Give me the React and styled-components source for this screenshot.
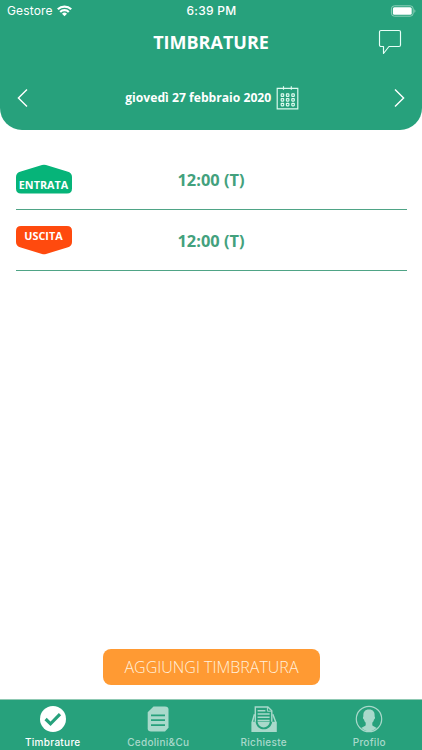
import React from "react";
import styled, { createGlobalStyle } from "styled-components";

const GlobalStyle = createGlobalStyle`
  * { box-sizing: border-box; }
  body { margin: 0; background: #fff; }
`;

const Screen = styled.div`
  width: 422px;
  height: 750px;
  display: flex;
  flex-direction: column;
  overflow: hidden;
  background: #fff;
  font-family: "Open Sans", sans-serif;
`;

const Header = styled.header`
  height: 129.5px;
  flex: none;
  background: #27a17c;
  border-radius: 0 0 22px 22px;
  color: #fff;
`;

const StatusBar = styled.div`
  height: 22px;
  padding: 0 6px 0 7px;
  display: grid;
  grid-template-columns: 1fr auto 1fr;
  align-items: center;
  font: 400 12px/22px Inter, sans-serif;
`;

const Carrier = styled.div`
  display: flex;
  align-items: center;
  gap: 4px;
  letter-spacing: 0.16px;
`;

const Clock = styled.div`
  font-weight: 500;
  letter-spacing: 0.3px;
`;

const Battery = styled.svg`
  justify-self: end;
`;

const TitleRow = styled.div`
  height: 40px;
  display: grid;
  grid-template-columns: 1fr auto 1fr;
  align-items: center;
  padding-right: 20px;
  padding-left: 20px;
`;

const Title = styled.h1`
  grid-column: 2;
  margin: 0;
  font-size: 18px;
  line-height: 24px;
  font-weight: 700;
`;

const IconButton = styled.button`
  display: flex;
  padding: 0;
  border: 0;
  background: none;
  color: inherit;
  justify-self: ${(p) => p.$align || "auto"};
`;

const DateRow = styled.div`
  height: 71px;
  padding: 0 17.5px 0 17px;
  display: flex;
  align-items: center;
  justify-content: space-between;
`;

const DatePicker = styled.div`
  display: flex;
  align-items: center;
  gap: 4.5px;
  padding-left: 2.5px;
  font-size: 12.15px;
  line-height: 16px;
  font-weight: 700;
  white-space: nowrap;
`;

const Entries = styled.main`
  flex: 1;
  padding: 19.5px 15.5px 0;
`;

const Entry = styled.div`
  height: 61px;
  display: grid;
  grid-template-columns: 56px 1fr 56px;
  align-items: center;
  border-bottom: 1px solid #4fa486;
`;

const Badge = styled.div`
  display: grid;
  width: 56px;
  height: 30px;
  > * { grid-area: 1 / 1; }
`;

const BadgeLabel = styled.span`
  align-self: ${(p) => (p.$down ? "start" : "end")};
  justify-self: center;
  margin: ${(p) => (p.$down ? "2.5px 0 0" : "0 0 2px")};
  color: #fff;
  font-size: 10.8px;
  line-height: 15px;
  font-weight: 700;
  z-index: 1;
`;

const Time = styled.span`
  padding-top: 2px;
  text-align: center;
  color: #43a17d;
  font-size: 16.4px;
  line-height: 22px;
  font-weight: 700;
`;

const ActionButton = styled.button`
  align-self: center;
  flex: none;
  width: 217px;
  height: 36px;
  margin: 0 0 14px 1px;
  padding: 0;
  border: 0;
  border-radius: 8px;
  background: #ff9a33;
  color: #fff0dc;
  font: 300 16px/36px "Open Sans", sans-serif;
  white-space: nowrap;
`;

const TabBar = styled.nav`
  flex: none;
  height: 51px;
  display: grid;
  grid-template-columns: repeat(4, 1fr);
  background: #27a17c;
  border-top: 1px solid #8fc9b3;
`;

const Tab = styled.div`
  display: flex;
  flex-direction: column;
  align-items: center;
  padding-top: 5px;
  color: ${(p) => (p.$active ? "#fff" : "#a9d9cb")};
`;

const TabLabel = styled.span`
  margin-top: 2px;
  font: 500 10px/14px Inter, sans-serif;
  letter-spacing: 0.3px;
`;

const WifiIcon = () => (
  <svg width="15" height="12" viewBox="0 0 15 12" fill="none" stroke="#fff" strokeWidth="2.2">
    <path d="M.8 4.3a9.5 9.5 0 0 1 13.4 0" />
    <path d="M3.200 7a6 6 0 0 1 8.600 0" />
    <path d="M7.500 11.300 5 8.800a3.500 3.500 0 0 1 5 0Z" fill="#fff" stroke="none" />
  </svg>
);

const BatteryIcon = () => (
  <Battery width="26" height="12" viewBox="0 0 26 12">
    <rect x="1.400" y=".8" width="21.800" height="10.400" rx="3" fill="none" stroke="#8dcfb9" />
    <rect x="2.900" y="2.300" width="18.800" height="7.400" rx="1.500" fill="#fff" />
    <path d="M24.400 4.200c1.300.4 1.300 3.200 0 3.600Z" fill="#8dcfb9" />
  </Battery>
);

const ChatIcon = () => (
  <svg width="24" height="26" viewBox="0 0 24 26" fill="none" stroke="#e8fff7" strokeWidth="1.150" strokeLinejoin="round">
    <path d="M3 1.500h18a1.500 1.500 0 0 1 1.500 1.500v13a1.500 1.500 0 0 1-1.500 1.500H11L5.500 24.500v-7H3a1.500 1.500 0 0 1-1.500-1.500v-13A1.500 1.500 0 0 1 3 1.500Z" />
  </svg>
);

const Chevron = ({ right }) => (
  <svg width="11" height="20" viewBox="0 0 11 20" fill="none" stroke="#fff" strokeWidth="1.400">
    <path d={right ? "M1 1.400 9.600 10 1 18.600" : "M10 1.400 1.400 10l8.600 8.600"} />
  </svg>
);

const CalendarIcon = () => (
  <svg width="23" height="24" viewBox="0 0 23 24" fill="none" stroke="#dffbf0" strokeWidth="1.150">
    <path d="M1.200 2.400h20.600v20.400H1.200ZM7.500.3v3.500M15.300.3v3.500" />
    {[8.3, 13, 17.7].map((y) =>
      [5.2, 10.4, 15.8].map((x) => (
        <rect key={`${x}-${y}`} x={x} y={y - 0.4} width="2.500" height="2.500" rx=".5" />
      ))
    )}
  </svg>
);

const BadgeShape = ({ down }) => (
  <svg width="56" height="30" viewBox="0 0 56 30" fill={down ? "#ff4a0e" : "#06b479"}>
    <path
      d={
        down
          ? "M5 1h46q5 0 5 5v11q0 4-4 5.300L30 29q-2 .7-4 0L4 22.300Q0 21 0 17V6Q0 1 5 1Z"
          : "M5 29.500h46q5 0 5-5V13q0-4-4-5.300L30 1q-2-.7-4 0L4 7.700Q0 9 0 13v11.500q0 5 5 5Z"
      }
    />
  </svg>
);

const CheckIcon = () => (
  <svg width="28" height="28" viewBox="0 0 28 28">
    <circle cx="14" cy="14" r="13" fill="currentColor" />
    <path d="m6.600 14 4.900 4.800 9.500-9.600" fill="none" stroke="#27a17c" strokeWidth="3.200" />
  </svg>
);

const DocumentIcon = () => (
  <svg width="28" height="28" viewBox="0 0 28 28">
    <path d="M9.500 1.500H21q3.500 0 3.500 3v18.200L21 26.500H7q-3.300 0-3.300-3V7.300Z" fill="currentColor" />
    <path d="M7 10.300h14M7 15.200h14M7 20.100h14" stroke="#27a17c" strokeWidth="1.700" />
  </svg>
);

const InboxIcon = () => (
  <svg width="28" height="28" viewBox="0 0 28 28" fill="none">
    <path d="M4.500 9.300 2.300 17M22.800 9.300l2.900 7.700" stroke="currentColor" strokeWidth="1.500" />
    <path d="M1.400 16.700h4.200c1.400 10.200 15 10.200 16.600 0h4.600v10.200H1.400Z" fill="currentColor" />
    <path d="M5.300 16.700V2h12.600l3.900 3.800v10.900" stroke="currentColor" strokeWidth="1.400" />
    <path d="M17.400 2v4.200h4.400" stroke="currentColor" />
    <path d="M7.500 16.800h12.400c-1.500 7.600-11 7.600-12.400 0Z" fill="currentColor" />
    <path d="M7.600 5.700h7.800M7.600 9h12M7.600 12.300h12M7.600 15.600h12" stroke="currentColor" strokeWidth="1.500" />
  </svg>
);

const ProfileIcon = () => (
  <svg width="28" height="28" viewBox="0 0 28 28">
    <circle cx="14" cy="14" r="12.700" fill="none" stroke="currentColor" strokeWidth="1.200" />
    <path d="M14 4.600c-4.300 0-6 2.700-5.600 6.900-.8.400-.5 2.500.6 3.100.3 1.500.9 2.500 1.700 3.200v2.500c-.7 1.200-2.800 1.600-4.300 2.500C8.200 25 11 26.200 14 26.200s5.800-1.200 7.600-3.400c-1.500-.9-3.600-1.300-4.300-2.500v-2.500c.8-.7 1.400-1.700 1.700-3.200 1.100-.6 1.400-2.700.6-3.100C20 7.300 18.300 4.600 14 4.600Z" fill="currentColor" />
  </svg>
);

const entries = [
  { label: "ENTRATA", time: "12:00 (T)", down: false },
  { label: "USCITA", time: "12:00 (T)", down: true },
];

const tabs = [
  { label: "Timbrature", Icon: CheckIcon, active: true },
  { label: "Cedolini&Cu", Icon: DocumentIcon },
  { label: "Richieste", Icon: InboxIcon },
  { label: "Profilo", Icon: ProfileIcon },
];

export default function App() {
  return (
    <Screen>
      <GlobalStyle />
      <Header>
        <StatusBar>
          <Carrier>Gestore <WifiIcon /></Carrier>
          <Clock>6:39 PM</Clock>
          <BatteryIcon />
        </StatusBar>
        <TitleRow>
          <Title>TIMBRATURE</Title>
          <IconButton $align="end" aria-label="Messaggi"><ChatIcon /></IconButton>
        </TitleRow>
        <DateRow>
          <IconButton aria-label="Giorno precedente"><Chevron /></IconButton>
          <DatePicker>giovedì 27 febbraio 2020 <CalendarIcon /></DatePicker>
          <IconButton aria-label="Giorno successivo"><Chevron right /></IconButton>
        </DateRow>
      </Header>
      <Entries>
        {entries.map(({ label, time, down }) => (
          <Entry key={label}>
            <Badge>
              <BadgeShape down={down} />
              <BadgeLabel $down={down}>{label}</BadgeLabel>
            </Badge>
            <Time>{time}</Time>
          </Entry>
        ))}
      </Entries>
      <ActionButton>AGGIUNGI TIMBRATURA</ActionButton>
      <TabBar>
        {tabs.map(({ label, Icon, active }) => (
          <Tab key={label} $active={active}>
            <Icon />
            <TabLabel>{label}</TabLabel>
          </Tab>
        ))}
      </TabBar>
    </Screen>
  );
}
